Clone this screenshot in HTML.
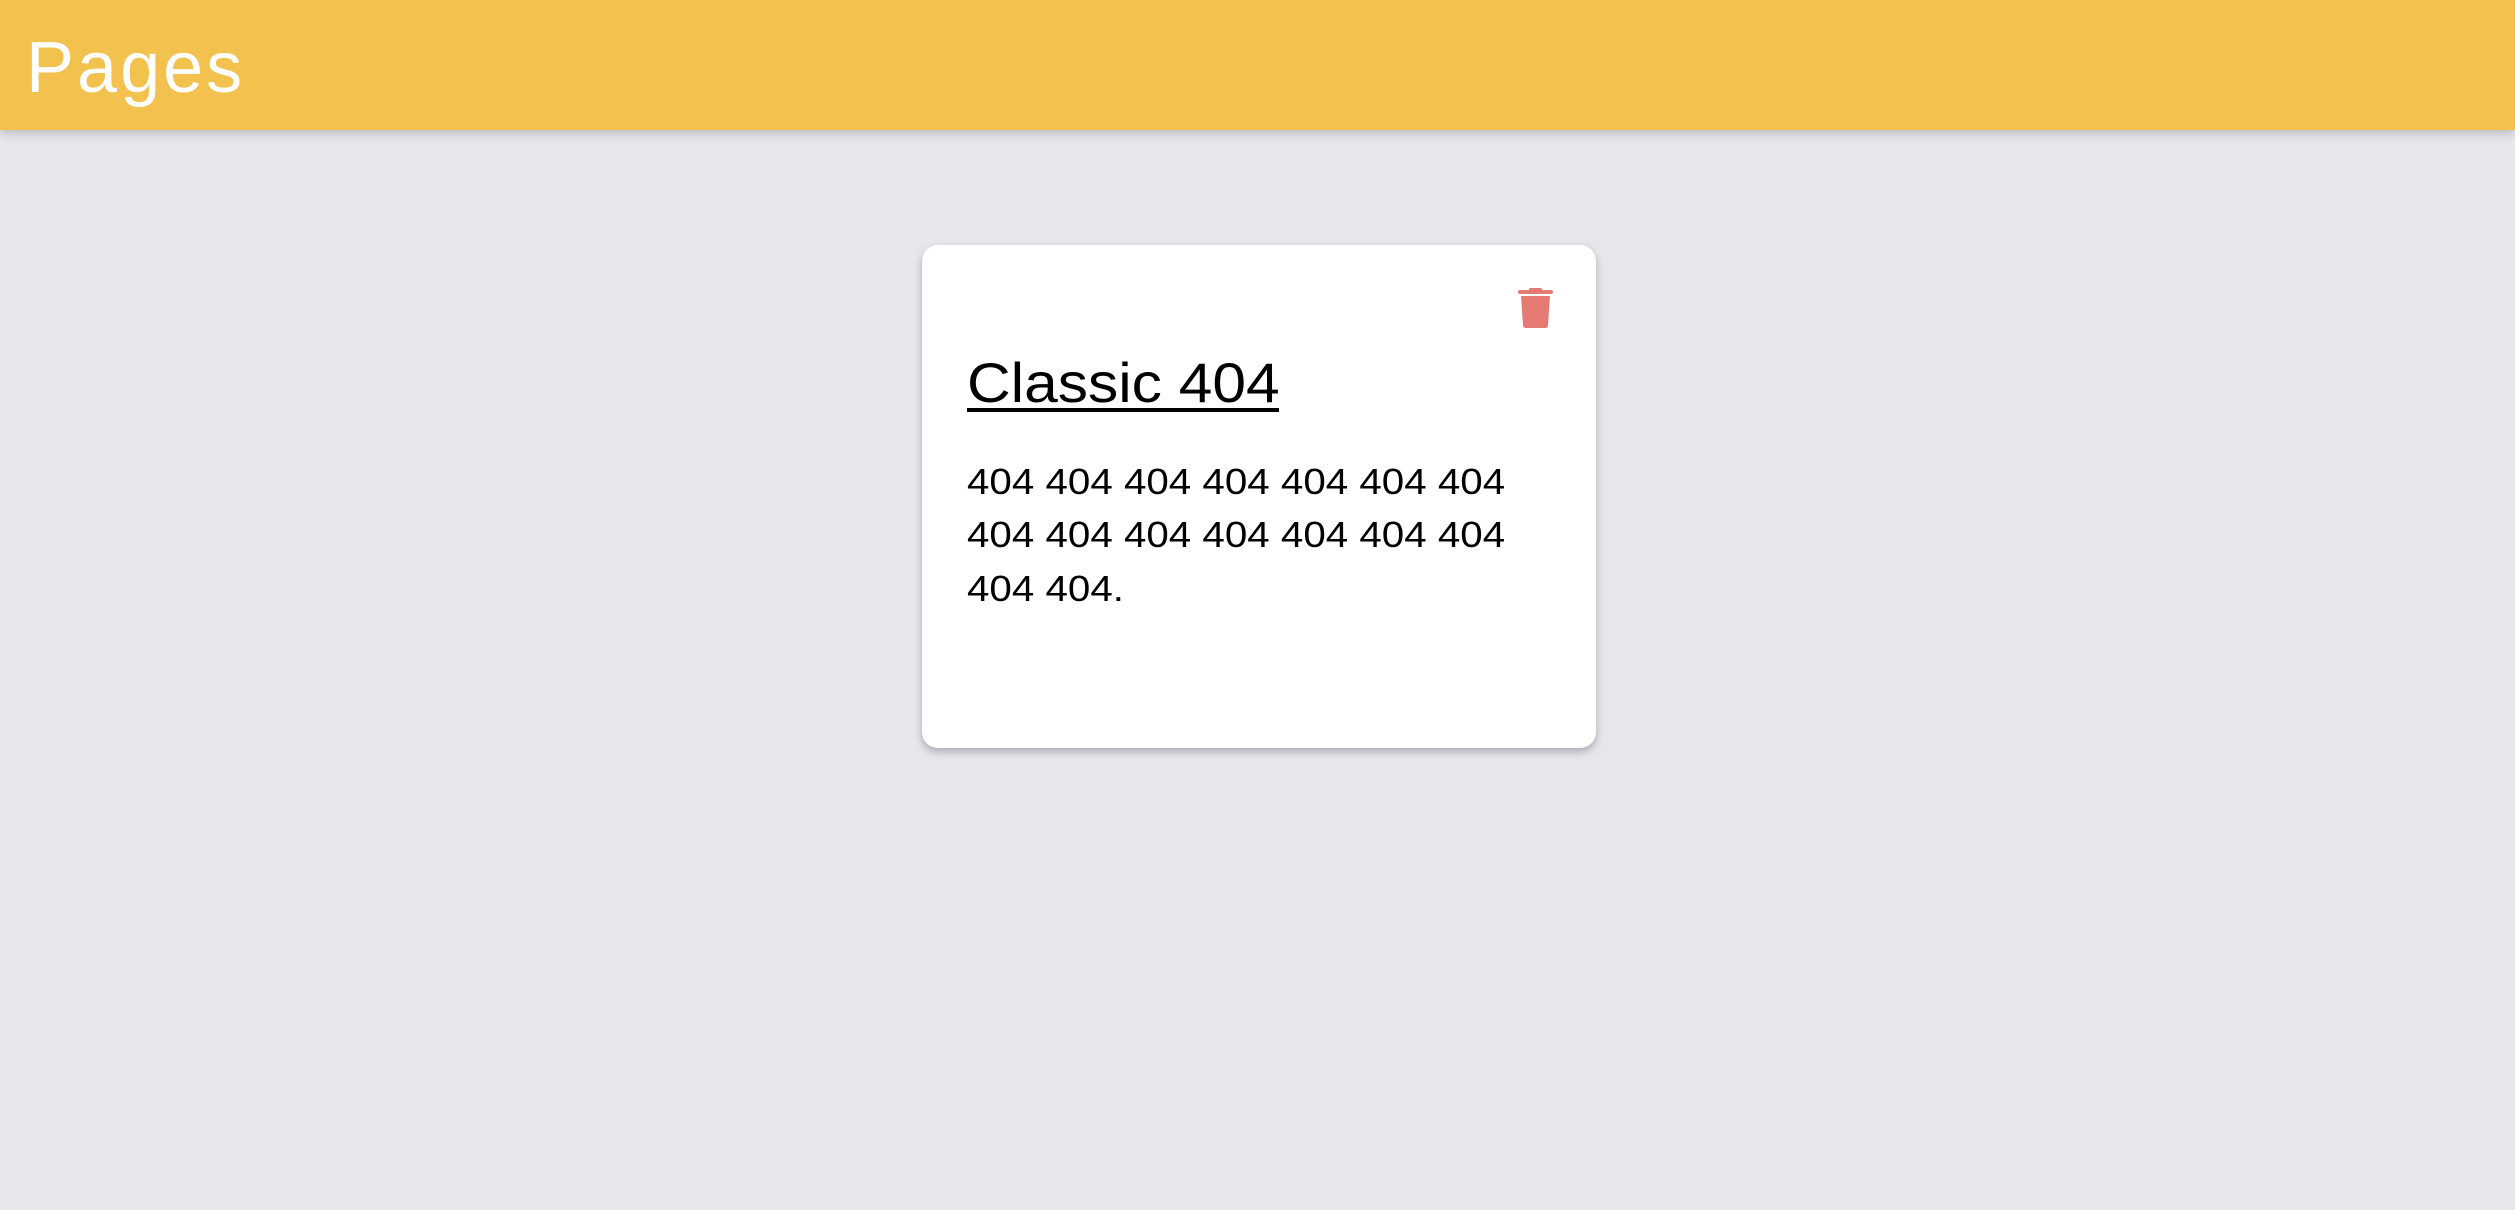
<!DOCTYPE html>
<html><head><meta charset="utf-8"><style>
html,body{margin:0;padding:0;}
body{width:2515px;height:1210px;background:#e6e7eb;position:relative;overflow:hidden;font-family:"Liberation Sans",sans-serif;}
.hdr{position:absolute;left:0;top:0;width:2515px;height:130px;background:#f2c14e;box-shadow:0 3px 10px rgba(0,0,0,0.2);}
.hdr span{position:absolute;left:26px;top:3px;line-height:130px;font-size:72px;color:#fff;letter-spacing:3px;}
.card{position:absolute;left:922px;top:245px;width:674px;height:503px;background:#fff;border-radius:16px;box-shadow:0 4px 8px rgba(60,60,80,0.35);}
.t{position:absolute;left:967px;top:351px;line-height:64px;font-size:56px;color:#000;white-space:nowrap;transform:scaleX(1.08);transform-origin:left top;}
.ul{position:absolute;left:967px;top:408px;width:312px;height:4px;background:#000;}
.b{position:absolute;left:967px;top:455px;font-size:36px;line-height:53.4px;color:#000;white-space:nowrap;transform:scaleX(1.12);transform-origin:left top;}
svg{position:absolute;left:1518px;top:288px;}
</style></head><body>
<div class="hdr"><span>Pages</span></div>
<div class="card"></div>
<svg width="35" height="40" viewBox="0 0 35 40"><rect x="11" y="0" width="13" height="3" rx="1.5" fill="#e57a73"/><rect x="0" y="2" width="35" height="4" rx="2" fill="#e57a73"/><path d="M3 8 H32 L30 37 Q30 40 27 40 H8 Q5 40 5 37 Z" fill="#e57a73"/></svg>
<div class="t">Classic 404</div>
<div class="ul"></div>
<div class="b">404 404 404 404 404 404 404<br>404 404 404 404 404 404 404<br>404 404.</div>
</body></html>
